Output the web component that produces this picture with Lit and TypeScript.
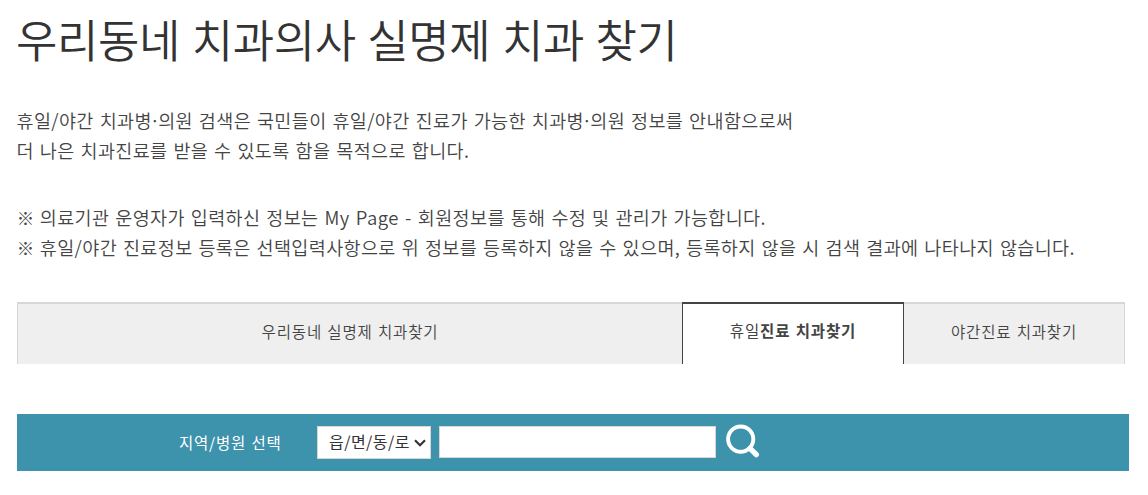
import { LitElement, html, css } from 'lit';
import { customElement, property, state } from 'lit/decorators.js';
import { classMap } from 'lit/directives/class-map.js';

interface Tab {
  id: string;
  lead: string;
  label: string;
}

const TABS: Tab[] = [
  { id: 'realname', lead: '', label: '우리동네 실명제 치과찾기' },
  { id: 'holiday', lead: '휴일', label: '진료 치과찾기' },
  { id: 'night', lead: '', label: '야간진료 치과찾기' },
];

@customElement('clinic-tabs')
export class ClinicTabs extends LitElement {
  @property()
  active = 'holiday';

  static styles = css`
    :host {
      display: block;
    }
    .tabs {
      display: grid;
      grid-template-columns: 665px 222px 221px;
      width: 1108px;
      height: 62px;
    }
    .tab {
      box-sizing: border-box;
      border: 0 solid #d7d7d7;
      border-top-width: 2px;
      background: #efefef;
      color: #444;
      font: 15.5px/20px 'Noto Sans CJK KR', sans-serif;
      font-weight: 350;
      letter-spacing: 0.85px;
      word-spacing: 1px;
      padding: 0 0 6px;
      cursor: pointer;
    }
    .tab:first-child {
      border-left-width: 1px;
    }
    .tab:last-child {
      border-right-width: 1px;
    }
    .tab.active {
      background: #fff;
      border-color: #444;
      border-left-width: 1px;
      border-right-width: 1px;
      font-weight: 700;
      padding-bottom: 8px;
    }
    .lead {
      font-weight: 400;
    }
  `;

  render() {
    return html`
      <div class="tabs">
        ${TABS.map(
          (tab) => html`
            <button
              class=${classMap({ tab: true, active: tab.id === this.active })}
              @click=${() => this.select(tab.id)}
            ><span class="lead">${tab.lead}</span>${tab.label}</button>
          `
        )}
      </div>
    `;
  }

  private select(id: string) {
    this.active = id;
  }
}

@customElement('clinic-search')
export class ClinicSearch extends LitElement {
  @state()
  private keyword = '';

  static styles = css`
    :host {
      display: block;
    }
    .bar {
      display: flex;
      align-items: flex-start;
      box-sizing: border-box;
      width: 1112px;
      height: 57px;
      padding: 12px 0 0 162px;
      background: #3d92ac;
      font-family: 'Noto Sans CJK KR', sans-serif;
    }
    .label {
      width: 138px;
      color: #fff;
      font-size: 15.5px;
      line-height: 33px;
      letter-spacing: 0.8px;
      word-spacing: 1px;
    }
    .region {
      display: flex;
      align-items: center;
      justify-content: space-between;
      box-sizing: border-box;
      width: 114px;
      height: 33px;
      margin-right: 8px;
      padding: 0 4px 0 11px;
      border: 1px solid #d7d7d7;
      background: #fff;
      color: #333;
      font-size: 16px;
      line-height: 29px;
      letter-spacing: 0.45px;
      white-space: nowrap;
    }
    .region span {
      padding-bottom: 2px;
    }
    .keyword {
      box-sizing: border-box;
      width: 277px;
      height: 32px;
      margin: 0 8px 0 0;
      padding: 0 8px;
      border: 1px solid #d7d7d7;
      background: #fff;
      font-size: 16px;
    }
    .submit {
      margin: -4px 0 0;
      padding: 0;
      border: 0;
      background: none;
      cursor: pointer;
    }
    svg {
      display: block;
    }
  `;

  render() {
    return html`
      <div class="bar">
        <span class="label">지역/병원 선택</span>
        <div class="region">
          <span>읍/면/동/로</span>
          <svg width="12" height="8" viewBox="0 0 12 8">
            <path d="M1 1.2 L6 6.2 L11 1.2" fill="none" stroke="#333" stroke-width="2.2" />
          </svg>
        </div>
        <input class="keyword" .value=${this.keyword} @input=${this.handleInput} />
        <button class="submit" aria-label="검색">
          <svg width="40" height="40" viewBox="0 0 40 40">
            <circle cx="16.7" cy="17.1" r="12.6" fill="none" stroke="#fff" stroke-width="3.9" />
            <path d="M26 26.4 L32.3 32.7" stroke="#fff" stroke-width="5.4" stroke-linecap="round" />
          </svg>
        </button>
      </div>
    `;
  }

  private handleInput(e: Event) {
    this.keyword = (e.target as HTMLInputElement).value;
  }
}

@customElement('app-root')
export class AppRoot extends LitElement {
  static styles = css`
    :host {
      display: block;
      box-sizing: border-box;
      height: 495px;
      padding: 0 0 0 17px;
      overflow: hidden;
      background: #fff;
      color: #444;
      font-family: 'Noto Sans CJK KR', sans-serif;
    }
    h1 {
      margin: 0 0 0 -1px;
      padding-top: 6px;
      color: #333;
      font-size: 45px;
      font-weight: 350;
      line-height: 66px;
      letter-spacing: -0.4px;
      word-spacing: 2px;
      white-space: nowrap;
    }
    p {
      margin: 0 0 0 -0.5px;
      font-size: 18.5px;
      font-weight: 350;
      line-height: 30px;
      letter-spacing: 0.38px;
      word-spacing: 1.4px;
      white-space: nowrap;
    }
    .intro {
      padding-top: 33px;
    }
    .notes {
      padding-top: 37px;
    }
    .dot {
      margin: 0 -2.2px;
    }
    .mark {
      margin: 0 -0.8px 0 0.3px;
      font-size: 17.5px;
      font-weight: 300;
      line-height: 1;
    }
    .latin {
      letter-spacing: 0.5px;
    }
    clinic-tabs {
      margin-top: 40px;
    }
    clinic-search {
      margin-top: 50px;
    }
  `;

  render() {
    const dot = html`<span class="dot">·</span>`;
    const mark = html`<span class="mark">※</span>`;
    return html`
      <h1>우리동네 치과의사 실명제 치과 찾기</h1>
      <p class="intro">
        휴일/야간 치과병${dot}의원 검색은 국민들이 휴일/야간 진료가 가능한 치과병${dot}의원 정보를 안내함으로써<br />
        더 나은 치과진료를 받을 수 있도록 함을 목적으로 합니다.
      </p>
      <p class="notes">
        ${mark} 의료기관 운영자가 입력하신 정보는 <span class="latin">My Page -</span> 회원정보를 통해 수정 및 관리가 가능합니다.<br />
        ${mark} 휴일/야간 진료정보 등록은 선택입력사항으로 위 정보를 등록하지 않을 수 있으며, 등록하지 않을 시 검색 결과에 나타나지 않습니다.
      </p>
      <clinic-tabs></clinic-tabs>
      <clinic-search></clinic-search>
    `;
  }
}
